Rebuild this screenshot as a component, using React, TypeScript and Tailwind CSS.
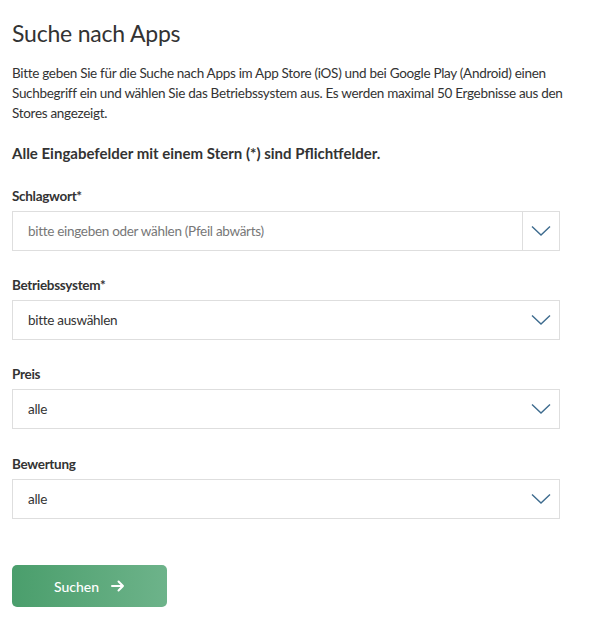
import React from "react";

const Chevron = () => (
  <svg width="20" height="12" viewBox="0 0 20 12" fill="none">
    <path d="M1 1.5 L10 10 L19 1.5" stroke="#3d6b8e" strokeWidth="1.4" />
  </svg>
);

function Select({ label, value, placeholder, divider }: { label: string; value: string; placeholder?: boolean; divider?: boolean }) {
  return (
    <div className="flex flex-col">
      <div className="text-[13.5px] font-bold text-[#333] leading-[20px] tracking-[-0.3px] mb-[5px]">{label}</div>
      <div className="flex h-[40px] w-[548px] border border-[#dedede] bg-white">
        <div className={`flex-1 flex items-center pl-[15px] text-[13.5px] tracking-[-0.3px] ${placeholder ? "text-[#777]" : "text-[#333]"}`}>{value}</div>
        <div className={`w-[37px] flex items-center justify-center ${divider ? "border-l border-[#dedede]" : ""}`}>
          <Chevron />
        </div>
      </div>
    </div>
  );
}

export default function App() {
  return (
    <div className="bg-white w-[605px] h-[643px] px-[12px] pt-[19px]" style={{ fontFamily: "Lato, 'Liberation Sans', sans-serif" }}>
      <h1 className="text-[23px] leading-[28px] text-[#333] font-normal tracking-[-0.2px]">Suche nach Apps</h1>
      <p className="mt-[16px] text-[13.5px] leading-[20px] text-[#333] tracking-[-0.3px] w-[560px]">
        Bitte geben Sie für die Suche nach Apps im App Store (iOS) und bei Google Play (Android) einen Suchbegriff ein und wählen Sie das Betriebssystem aus. Es werden maximal 50 Ergebnisse aus den Stores angezeigt.
      </p>
      <p className="mt-[20px] text-[15px] leading-[20px] font-bold text-[#333]">Alle Eingabefelder mit einem Stern (*) sind Pflichtfelder.</p>
      <div className="mt-[23px] flex flex-col gap-[24px]">
        <Select label="Schlagwort*" value="bitte eingeben oder wählen (Pfeil abwärts)" placeholder divider />
        <Select label="Betriebssystem*" value="bitte auswählen" />
        <Select label="Preis" value="alle" />
        <div className="mt-[1px]">
          <Select label="Bewertung" value="alle" />
        </div>
      </div>
      <button className="mt-[46px] w-[155px] h-[42px] rounded-[5px] bg-gradient-to-r from-[#4a9e6c] to-[#6db38a] text-white text-[14px] font-medium flex items-center justify-center gap-[12px]">
        <span>Suchen</span>
        <svg width="14" height="12" viewBox="0 0 14 12" fill="none">
          <path d="M1 6 H12 M7.5 1.5 L12 6 L7.5 10.5" stroke="white" strokeWidth="2" strokeLinecap="round" strokeLinejoin="round" />
        </svg>
      </button>
    </div>
  );
}
